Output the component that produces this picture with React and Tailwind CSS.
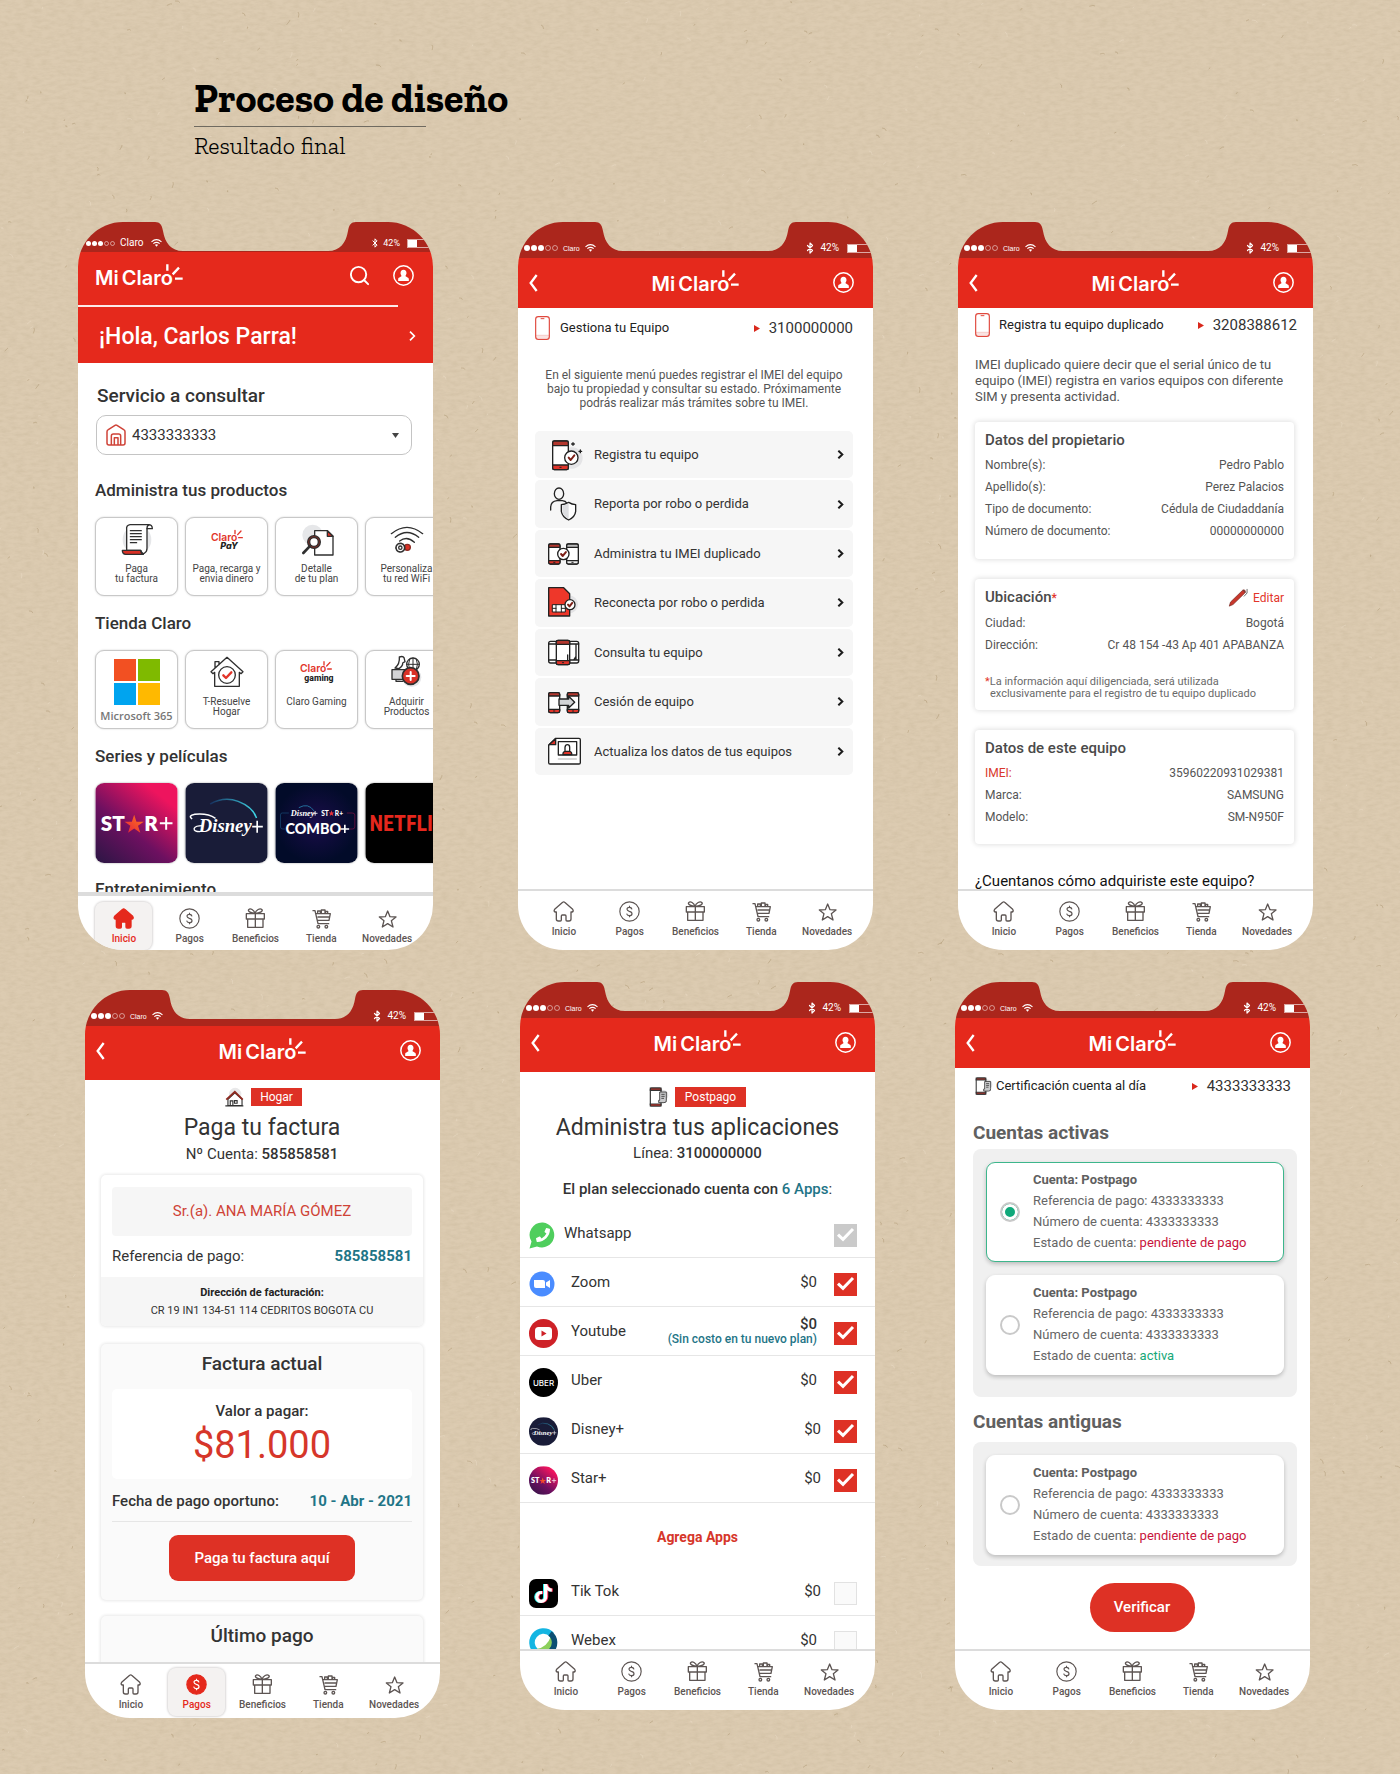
import React from "react";
import { Bluetooth, Search } from "lucide-react";
import { FaPhoneAlt, FaTiktok } from "react-icons/fa";

/* ---------- Paper background ---------- */

function seeded(seed) {
  let s = seed;
  return () => {
    s = (s * 16807) % 2147483647;
    return s / 2147483647;
  };
}

const rand = seeded(77);
const fibres = Array.from({ length: 1500 }, () => {
  const x = Math.round(rand() * 1400);
  const y = Math.round(rand() * 1774);
  const a = rand() * Math.PI;
  const l = 1 + rand() * 5;
  const dx = Math.cos(a) * l;
  const dy = Math.sin(a) * l;
  return {
    d: `M${x} ${y}q${(dx / 2 + 1.5).toFixed(1)} ${(dy / 2 - 1.5).toFixed(1)} ${dx.toFixed(1)} ${dy.toFixed(1)}`,
    dark: rand() > 0.45,
  };
});

function Paper() {
  return (
    <svg className="absolute inset-0 h-full w-full" viewBox="0 0 1400 1774" preserveAspectRatio="xMidYMid slice" aria-hidden="true">
      <defs>
        <filter id="grain" x="0" y="0" width="100%" height="100%">
          <feTurbulence type="fractalNoise" baseFrequency="0.12 0.3" numOctaves="3" seed="4" />
          <feColorMatrix values="0 0 0 0 0.45  0 0 0 0 0.36  0 0 0 0 0.22  0.6 0 0 0 -0.2" />
        </filter>
      </defs>
      <rect width="1400" height="1774" filter="url(#grain)" opacity="0.6" />
      {fibres.map((f, i) => (
        <path key={i} d={f.d} fill="none" stroke={f.dark ? "#a08860" : "#eee3cf"} strokeWidth="0.9" opacity="0.42" />
      ))}
    </svg>
  );
}

/* ---------- Phone shell ---------- */

function StatusDots({ small }) {
  return (
    <span className="flex gap-px">
      {[1, 1, 1, 0, 0].map((on, i) => (
        <span
          key={i}
          className={
            (small ? "size-[5px] " : "size-[6px] ") +
            "rounded-full " +
            (on ? "bg-white" : "border border-white/50")
          }
        />
      ))}
    </span>
  );
}

function Wifi() {
  return (
    <svg className="h-[8px] w-[11px]" viewBox="0 0 33 24" fill="none" stroke="#fff" strokeWidth="3.2" aria-hidden="true">
      <path d="M1.500 8.500Q16.500 -4.500 31.500 8.500M7 14Q16.500 6 26 14" />
      <path d="M11.500 17.500Q16.500 13.500 21.500 17.500L16.500 23.500Z" fill="#fff" stroke="none" />
    </svg>
  );
}

function StatusBar({ small }) {
  return (
    <div
      className={
        "relative flex shrink-0 justify-between overflow-hidden bg-[#ab261c] text-white [clip-path:path('M0_0H77C82_0_84_3_85_9C87_21_93_29_105_29H250C262_29_268_21_270_9C271_3_273_0_278_0H355V40H0Z')] " +
        (small ? "h-[30px] pt-[15px]" : "h-[36px] pt-[20px]")
      }
    >
      <div className={"flex h-[12px] items-center " + (small ? "gap-[5px] pl-[8px]" : "gap-[5px] pl-[6px]")}>
        <StatusDots small={small} />
        <span className={small ? "w-[26px] text-[10px] leading-none" : "w-[17px] text-[7px] leading-none font-[Liberation_Sans]"}>Claro</span>
        <Wifi />
      </div>
      {!small && (
        <span className="absolute inset-x-0 top-[20px] text-center text-[9px] leading-[12px]">04:20 AM</span>
      )}
      <div className={"flex h-[12px] items-center " + (small ? "gap-[3px] text-[9px]" : "gap-[4px] text-[10px]")}>
        <Bluetooth className={small ? "size-[10px]" : "size-[12px]"} strokeWidth={2.4} />
        <span className="leading-none">42%</span>
        <span className="ml-1 flex h-[9px] w-[26px] border border-white/60 bg-transparent">
          <span className="w-[9px] bg-white" />
        </span>
      </div>
    </div>
  );
}

function BrandMark() {
  return (
    <span className="inline-flex items-end text-white">
      <span className="flex gap-[3px] font-[Inter] text-[20px] leading-[24px] font-semibold">
        <span>Mi</span>
        <span>Claro</span>
      </span>
      <svg className="-ml-[8px] h-[28px] w-[18px]" viewBox="0 0 54 84" stroke="#fff" strokeWidth="7" aria-hidden="true">
        <path d="M7 7V26M23 37L42 17M30 50H53" />
      </svg>
    </span>
  );
}

function UserButton() {
  return (
    <button type="button" aria-label="Mi perfil" className="size-[21px]">
      <svg className="size-full" viewBox="0 0 63 63" aria-hidden="true">
        <circle cx="31.500" cy="31.500" r="29" fill="none" stroke="#fff" strokeWidth="4.500" />
        <path
          fill="#fff"
          d="M31.500 14c6 0 9 4 9 10 0 4-2 6-3 9 0 3 9 3 10 9v6h-32v-6c1-6 10-6 10-9-1-3-3-5-3-9 0-6 3-10 9-10z"
        />
      </svg>
    </button>
  );
}

function TopBar({ tall }) {
  return (
    <header
      className={
        "grid shrink-0 grid-cols-[1fr_auto_1fr] items-start bg-[#e5291c] pr-[19px] pl-[11px] " +
        (tall ? "h-[54px]" : "h-[50px]")
      }
    >
      <button type="button" aria-label="Volver" className="mt-[16px] w-[10px]">
        <svg className="h-[18px] w-[9px]" viewBox="0 0 27 54" fill="none" stroke="#fff" strokeWidth="7" aria-hidden="true">
          <path d="M23 3L5 27L23 51" />
        </svg>
      </button>
      <span className="mt-[10px] ml-[8px]">
        <BrandMark />
      </span>
      <span className="mt-[14px] justify-self-end">
        <UserButton />
      </span>
    </header>
  );
}

const line = { fill: "none", stroke: "#5d5553", strokeWidth: 4, strokeLinejoin: "round", strokeLinecap: "round" };

function HomeGlyph({ active }) {
  return (
    <svg className="size-[21px]" viewBox="156 932 63 63" {...line} {...(active ? { fill: "#e5291c", stroke: "#e5291c" } : {})} aria-hidden="true">
      <path d="M185 936Q188 933 191 936L215 957Q219 963 213 965H210V986Q210 992 204 992H198Q195 992 195 989V977Q195 974 192 974H184Q181 974 181 977V989Q181 992 178 992H172Q166 992 166 986V965H163Q157 963 161 957Z" />
    </svg>
  );
}

function CoinGlyph({ active }) {
  return (
    <svg className="size-[21px]" viewBox="0 0 63 63" aria-hidden="true">
      <circle cx="31.500" cy="31.500" r="29" fill={active ? "#e5291c" : "none"} stroke={active ? "#e5291c" : "#5d5553"} strokeWidth="3.500" />
      <path
        d="M39 25q-1-6-8-6-7 0-7 6 0 4 7 6 8 2 8 7 0 6-8 6-7 0-8-6M31.500 14v5M31.500 44v5"
        fill="none"
        stroke={active ? "#fff" : "#5d5553"}
        strokeWidth="3.500"
      />
    </svg>
  );
}

function GiftGlyph() {
  return (
    <svg className="size-[21px]" viewBox="557 932 63 63" {...line} aria-hidden="true">
      <path d="M561 949H615V965H561ZM565 965H611V990H565ZM588 949V990M586 948C572 946 565 942 568 937C573 931 584 938 587 948C590 938 602 931 608 937C611 942 604 946 590 948" />
    </svg>
  );
}

function CartGlyph() {
  return (
    <svg className="size-[21px]" viewBox="753 932 63 63" {...line} aria-hidden="true">
      <path d="M759 940H765L774 979H806M769 949H811L807 969H772M774 959H808" />
      <path d="M773 948V941H781V948M784 948V938H795V948M797 948V942H803V948" />
      <circle cx="775" cy="988" r="4" />
      <circle cx="799" cy="988" r="4" />
    </svg>
  );
}

function StarGlyph() {
  return (
    <svg className="size-[21px]" viewBox="950 932 63 63" {...line} aria-hidden="true">
      <path d="M982 941L989 958L1007 959L993 970L998 989L982 979L966 989L971 970L957 959L975 958Z" />
    </svg>
  );
}

const tabs = [
  ["Inicio", HomeGlyph],
  ["Pagos", CoinGlyph],
  ["Beneficios", GiftGlyph],
  ["Tienda", CartGlyph],
  ["Novedades", StarGlyph],
];

function TabBar({ active, variant = "plain" }) {
  const outer = {
    plain: "h-[61px] border-t-2 pt-[4px]",
    pay: "h-[56px] border-t-2 pt-[4px]",
    home: "h-[58px] border-t-4 pt-[6px]",
  }[variant];
  return (
    <nav className={"grid shrink-0 grid-cols-5 items-start border-[#dcdcdc] bg-white px-[13px] " + outer}>
      {tabs.map(([label, Glyph]) => {
        const on = active === label;
        return (
          <a
            key={label}
            href="#"
            className={
              "mx-auto flex h-[48px] w-[57px] flex-col items-center rounded-[8px] pt-[6px] text-[10px] leading-[12px] font-medium " +
              (on ? "bg-[#f4f2f1] text-[#e5291c] shadow-[0_0_2px_1px_#dcdada]" : "text-[#5d5553]")
            }
          >
            <Glyph active={on} />
            <span className="mt-[4px]">{label}</span>
          </a>
        );
      })}
    </nav>
  );
}

function Phone({ children, small, className = "" }) {
  return (
    <section
      className={
        "flex h-[728px] w-[355px] shrink-0 flex-col overflow-hidden rounded-[45px] font-[Roboto,sans-serif] text-[#333] " + className
      }
    >
      <StatusBar small={small} />
      {children}
    </section>
  );
}

function Content({ children, className = "" }) {
  return <div className={"flex min-h-0 flex-1 flex-col overflow-hidden bg-white " + className}>{children}</div>;
}

function Arrow() {
  return (
    <svg className="h-[7px] w-[6px]" viewBox="0 0 6 7" aria-hidden="true">
      <path d="M0 0L6 3.500L0 7Z" fill="#d9281c" />
    </svg>
  );
}

function LineNumber({ children }) {
  return (
    <span className="ml-auto flex items-center gap-[9px] text-[15px]">
      <Arrow />
      {children}
    </span>
  );
}

/* ---------- Screen 1: home ---------- */

const ink = { fill: "none", stroke: "#2f2f2f", strokeWidth: 4, strokeLinejoin: "round", strokeLinecap: "round" };

function ProductArt({ box, children }) {
  return (
    <svg className="size-[36px]" viewBox={box} {...ink} aria-hidden="true">
      {children}
    </svg>
  );
}

function ClaroArt({ box, x, y, children }) {
  return (
    <ProductArt box={box}>
      <g stroke="none" fill="#e2352a" className="font-[Inter]">
        <text x={x} y={y} fontSize="31" fontWeight="600">Claro</text>
        {children}
      </g>
      <path d={`M${x + 72} ${y - 31}v10M${x + 80} ${y - 18}l10-11M${x + 83} ${y - 9}h11`} stroke="#e2352a" strokeWidth="4" />
    </ProductArt>
  );
}

const products = [
  {
    lines: ["Paga", "tu factura"],
    art: (
      <ProductArt box="177 180 108 108">
        <circle cx="231" cy="236" r="43" fill="#e6e7e9" stroke="none" />
        <path d="M210 191Q198 193 200 206V268H242Q248 282 254 276Q261 272 261 262V203H277Q277 190 264 191Z" fill="#fff" />
        <path d="M261 203Q261 193 267 192" />
        <path d="M187 268H242Q242 278 250 280H197Q187 280 187 268Z" fill="#d93025" />
        <path d="M211 209H244M211 218H244M211 227H244M211 236H244M211 245H230" strokeWidth="3.500" />
      </ProductArt>
    ),
  },
  {
    lines: ["Paga, recarga y", "envia dinero"],
    art: (
      <ClaroArt box="450 180 108 108" x={456} y={239}>
        <text x="484" y="264" fontSize="27" fontWeight="800" fontStyle="italic" fill="#222">PaY</text>
      </ClaroArt>
    ),
  },
  {
    lines: ["Detalle", "de tu plan"],
    art: (
      <ProductArt box="718 180 108 108">
        <circle cx="759" cy="222" r="31" fill="#e6e7e9" stroke="none" />
        <path d="M765 209H803L820 226V282H765Z" fill="#fff" />
        <path d="M803 209V226H820Z" fill="#d93025" />
        <circle cx="763" cy="243" r="19" fill="#8b2a22" />
        <circle cx="763" cy="243" r="13" fill="#fff" />
        <path d="M750 256L731 276" strokeWidth="8" />
      </ProductArt>
    ),
  },
  {
    lines: ["Personaliza", "tu red WiFi"],
    art: (
      <ProductArt box="991 180 108 108">
        <path d="M998 218Q1045 180 1092 218M1010 229Q1045 200 1080 229M1023 240Q1045 223 1067 244" />
        <circle cx="1046" cy="259" r="9" fill="#d93025" stroke="#8b2a22" />
        <circle cx="1025" cy="260" r="13" fill="#fff" strokeWidth="5" strokeDasharray="6 3" />
        <circle cx="1025" cy="260" r="5" />
      </ProductArt>
    ),
  },
];

const store = [
  { microsoft: true },
  {
    lines: ["T-Resuelve", "Hogar"],
    art: (
      <ProductArt box="446 582 108 108">
        <path d="M452 635L500 592L548 635L542 641L537 637V679H463V637L458 641ZM464 624V605H476V614" fill="#fff" />
        <circle cx="500" cy="645" r="25" />
        <path d="M489 646L497 654L513 637" stroke="#e2352a" strokeWidth="7" />
      </ProductArt>
    ),
  },
  {
    lines: ["Claro Gaming"],
    art: (
      <ClaroArt box="717 582 108 108" x={720} y={636}>
        <text x="733" y="662" fontSize="26" fontWeight="800" fill="#222" className="font-[Roboto]">gaming</text>
      </ClaroArt>
    ),
  },
  {
    lines: ["Adquirir", "Productos"],
    art: (
      <ProductArt box="988 582 108 108">
        <circle cx="1056" cy="652" r="29" fill="#e6e7e9" stroke="none" />
        <circle cx="1060" cy="613" r="19" fill="#fff" />
        <path d="M1041 613H1079M1060 594V632M1050 597Q1043 613 1050 629M1070 597Q1077 613 1070 629" strokeWidth="3" />
        <path d="M1019 591Q1030 587 1033 593L1036 605L1029 609Q1030 618 1018 626L1006 624Q1021 612 1019 591Z" fill="#fff" />
        <path d="M997 629H1045V658H997ZM1009 658V664H1030" fill="#d3d4d6" />
        <circle cx="1053" cy="648" r="25" fill="#d93025" strokeWidth="5" />
        <path d="M1053 636V660M1041 648H1065" stroke="#fff" strokeWidth="6" />
      </ProductArt>
    ),
  },
];

function Tile({ item }) {
  return (
    <a
      href="#"
      className="flex h-[79px] w-[83px] shrink-0 flex-col items-center rounded-[9px] border border-[#c8c8c8] bg-white pt-[3px] shadow-[0_0_2px_#ccc]"
    >
      {item.microsoft ? (
        <>
          <span className="mt-[5px] grid grid-cols-2 gap-[2px]">
            <span className="size-[22px] bg-[#f25022]" />
            <span className="size-[22px] bg-[#7fba00]" />
            <span className="size-[22px] bg-[#00a4ef]" />
            <span className="size-[22px] bg-[#ffb900]" />
          </span>
          <span className="mt-[3px] font-['Open_Sans'] text-[11px] leading-[16px] font-semibold whitespace-nowrap text-[#777]">
            Microsoft 365
          </span>
        </>
      ) : (
        <>
          {item.art}
          <span className="mt-[7px] text-center text-[10px] leading-[10px] whitespace-nowrap text-[#444]">
            {item.lines.map((l) => (
              <span key={l} className="block">{l}</span>
            ))}
          </span>
        </>
      )}
    </a>
  );
}

const STAR = "M0 -25L6 -7L25 -7L10 4L16 22L0 11L-16 22L-10 4L-25 -7L-6 -7Z";

function StarArt() {
  return (
    <svg className="size-full" viewBox="0 0 246 240" aria-label="Star+">
      <defs>
        <linearGradient id="starBg" x1="0.1" y1="1" x2="0.9" y2="0">
          <stop offset="0" stopColor="#321547" />
          <stop offset="0.4" stopColor="#6d1060" />
          <stop offset="0.85" stopColor="#ee145e" />
        </linearGradient>
        <linearGradient id="starFill" x1="0" y1="1" x2="1" y2="0">
          <stop offset="0" stopColor="#e5203c" />
          <stop offset="1" stopColor="#ff7a1c" />
        </linearGradient>
      </defs>
      <rect width="246" height="240" fill="url(#starBg)" />
      <g fill="#fff" className="font-[Lato]" fontSize="62" fontWeight="800">
        <text x="16" y="143">ST</text>
        <text x="146" y="143">R</text>
      </g>
      <path d={STAR} transform="translate(116 124) scale(1.150)" fill="url(#starFill)" />
      <path d="M212 102V140M193 121H231" stroke="#fff" strokeWidth="6" />
    </svg>
  );
}

function DisneyWord({ x, y, size }) {
  return (
    <text x={x} y={y} fontSize={size} fontStyle="italic" fontWeight="700" fill="#fff" className="font-[Liberation_Serif]">
      Disney
    </text>
  );
}

function DisneyArt() {
  return (
    <svg className="size-full" viewBox="0 0 246 240" aria-label="Disney+">
      <defs>
        <linearGradient id="arc" x1="0" x2="1">
          <stop offset="0" stopColor="#16305e" />
          <stop offset="1" stopColor="#3fd8e8" />
        </linearGradient>
      </defs>
      <rect width="246" height="240" fill="#191c38" />
      <path d="M74 63Q115 40 158 55Q202 72 213 105" fill="none" stroke="url(#arc)" strokeWidth="4.500" />
      <DisneyWord x="40" y="147" size="56" />
      <path d="M20 108Q6 98 28 94Q66 90 90 106" fill="none" stroke="#fff" strokeWidth="4.500" />
      <path d="M44 146Q24 146 26 136Q30 128 52 128" fill="none" stroke="#fff" strokeWidth="4" />
      <path d="M215 113V149M200 131H232" stroke="#fff" strokeWidth="5" />
    </svg>
  );
}

function ComboArt() {
  return (
    <svg className="size-full" viewBox="0 0 246 240" aria-label="Combo+">
      <defs>
        <radialGradient id="comboBg">
          <stop offset="0" stopColor="#1a0d4a" />
          <stop offset="1" stopColor="#020b29" />
        </radialGradient>
      </defs>
      <rect width="246" height="240" fill="url(#comboBg)" />
      <path d="M40 90H20Q15 90 15 96V132Q15 138 22 138H28" fill="none" stroke="#14406a" strokeWidth="2.500" />
      <path d="M214 90H230Q238 90 238 96V132Q238 138 230 138H222" fill="none" stroke="#6a1140" strokeWidth="2.500" />
      <path d="M70 74Q98 58 116 84" fill="none" stroke="#2683b0" strokeWidth="2.500" />
      <DisneyWord x="46" y="98" size="25" />
      <path d="M119 84V98M112 91H126" stroke="#fff" strokeWidth="2.500" />
      <g fill="#fff" className="font-[Lato]" fontWeight="900">
        <text x="137" y="98" fontSize="20">ST</text>
        <text x="178" y="98" fontSize="20">R+</text>
        <text x="30" y="152" fontSize="43">COMBO</text>
      </g>
      <path d={STAR} transform="translate(168 91) scale(0.360)" fill="#e8333a" />
      <path d="M208 125V150M195 138H221" stroke="#fff" strokeWidth="5" />
    </svg>
  );
}

function NetflixArt() {
  return (
    <svg className="size-full" viewBox="0 0 246 240" aria-label="Netflix">
      <rect width="246" height="240" fill="#000" />
      <text
        x="12"
        y="143"
        fontSize="66"
        fontWeight="700"
        fill="#e5271d"
        className="font-['Roboto_Condensed','Liberation_Sans_Narrow','Open_Sans_Condensed','DejaVu_Sans_Condensed']"
      >
        NETFLIX
      </text>
    </svg>
  );
}

function Shelf({ title, children }) {
  return (
    <section className="flex h-[133px] shrink-0 flex-col">
      <h3 className="text-[17px] leading-[24px] font-medium">{title}</h3>
      <div className="mt-[15px] flex gap-[7px]">{children}</div>
    </section>
  );
}

function HomeScreen() {
  return (
    <Phone small>
      <header className="flex h-[111px] shrink-0 flex-col bg-[#e5291c] text-white">
        <div className="flex h-[53px] items-start justify-between pr-[19px] pl-[17px]">
          <span className="mt-[10px]">
            <BrandMark />
          </span>
          <div className="mt-[12px] flex items-center gap-[22px]">
            <button type="button" aria-label="Buscar">
              <Search className="size-[23px]" strokeWidth={2} />
            </button>
            <UserButton />
          </div>
        </div>
        <div className="h-[2px] w-[90%] bg-white/90" />
        <a href="#" className="flex flex-1 items-center justify-between pr-[17px] pl-[21px]">
          <h2 className="mt-[4px] text-[23px] leading-[26px] font-medium">¡Hola, Carlos Parra!</h2>
          <svg className="mt-[2px] h-[10px] w-[7px]" viewBox="0 0 21 30" fill="none" stroke="#fff" strokeWidth="5" aria-hidden="true">
            <path d="M3 2L16 15L3 28" />
          </svg>
        </a>
      </header>
      <Content className="pl-[17px]">
        <label htmlFor="servicio" className="mt-[21px] pl-[2px] text-[19px] leading-[24px] font-medium">
          Servicio a consultar
        </label>
        <div className="mt-[7px] mr-[21px] ml-px grid h-[40px] shrink-0 items-center">
          <select
            id="servicio"
            className="h-full w-full appearance-none rounded-[10px] border border-[#c4c4c4] bg-white pl-[35px] text-[15px] [grid-area:1/1]"
          >
            <option>4333333333</option>
          </select>
          <svg className="pointer-events-none ml-[10px] h-[22px] w-[20px] [grid-area:1/1]" viewBox="139 1092 60 66" fill="none" stroke="#cf4338" strokeWidth="4.500" strokeLinejoin="round" aria-hidden="true">
            <path d="M142 1115Q142 1111 146 1109L166 1096Q169 1094 172 1096L192 1109Q196 1111 196 1115V1149Q196 1155 190 1155H148Q142 1155 142 1149ZM155 1155V1128Q155 1122 161 1122H177Q183 1122 183 1128V1155M164 1155V1133H175V1155" />
          </svg>
          <svg className="pointer-events-none mr-[13px] h-[5px] w-[7px] justify-self-end [grid-area:1/1]" viewBox="0 0 7 5" aria-hidden="true">
            <path d="M0 0H7L3.500 5Z" fill="#444" />
          </svg>
        </div>
        <div className="mt-[23px] flex flex-col">
          <Shelf title="Administra tus productos">
            {products.map((p) => (
              <Tile key={p.lines[0]} item={p} />
            ))}
          </Shelf>
          <Shelf title="Tienda Claro">
            {store.map((p, i) => (
              <Tile key={i} item={p} />
            ))}
          </Shelf>
          <Shelf title="Series y películas">
            {[StarArt, DisneyArt, ComboArt, NetflixArt].map((Art, i) => (
              <a key={i} href="#" className="h-[80px] w-[83px] shrink-0 overflow-hidden rounded-[9px] shadow-[0_0_2px_#999]">
                <Art />
              </a>
            ))}
          </Shelf>
          <Shelf title="Entretenimiento" />
        </div>
      </Content>
      <TabBar active="Inicio" variant="home" />
    </Phone>
  );
}

/* ---------- Screen 2: device menu ---------- */

function MenuArt({ y, children }) {
  return (
    <svg className="size-[36px]" viewBox={`140 ${y} 108 108`} {...ink} stroke="#222" aria-hidden="true">
      {children}
    </svg>
  );
}

function MiniPhone({ x, y, w, h, red = true, top }) {
  const band = Math.round(h * 0.16);
  return (
    <g>
      <rect x={x} y={y} width={w} height={h} rx="5" fill="#fff" />
      <path d={`M${x} ${y + band}V${y + 5}Q${x} ${y} ${x + 5} ${y}H${x + w - 5}Q${x + w} ${y} ${x + w} ${y + 5}V${y + band}Z`} fill={top || (red ? "#b3372e" : "#bbb")} />
      <path
        d={`M${x} ${y + h - band}H${x + w}V${y + h - 5}Q${x + w} ${y + h} ${x + w - 5} ${y + h}H${x + 5}Q${x} ${y + h} ${x} ${y + h - 5}Z`}
        fill={red ? "#e0342a" : "#eee"}
      />
      <path d={`M${x + w / 2 - 2} ${y + h - band / 2}h4`} strokeWidth="3" />
    </g>
  );
}

function CheckBadge({ x, y, r }) {
  return (
    <g>
      <circle cx={x} cy={y} r={r} fill="#fff" />
      <path d={`M${x - r * 0.4} ${y}l${r * 0.3} ${r * 0.35}l${r * 0.55} ${-r * 0.7}`} stroke="#7d2018" strokeWidth="6" />
    </g>
  );
}

const menu = [
  [
    "Registra tu equipo",
    <MenuArt y={681}>
      <circle cx="215" cy="744" r="32" fill="#e4e4e6" stroke="none" />
      <MiniPhone x={157} y={693} w={47} h={86} />
      <CheckBadge x={213} y={743} r={20} />
      <path d="M218 698V706M214 702H222M240 720V728M236 724H244" />
    </MenuArt>,
  ],
  [
    "Reporta por robo o perdida",
    <MenuArt y={829}>
      <ellipse cx="176" cy="852" rx="14" ry="17" fill="#f6f6f6" />
      <path d="M151 901V892Q152 875 170 873H186Q196 874 199 880" />
      <path d="M205 878Q215 884 226 885V905Q224 922 205 931Q186 922 183 905V885Q195 884 205 878Z" fill="#fff" />
      <path d="M205 881Q194 886 186 888V905Q188 920 205 928Z" fill="#dcdde0" stroke="none" />
    </MenuArt>,
  ],
  [
    "Administra tu IMEI duplicado",
    <MenuArt y={977}>
      <MiniPhone x={145} y={1001} w={34} h={60} />
      <MiniPhone x={199} y={1001} w={35} h={60} red={false} />
      <CheckBadge x={189} y={1031} r={17} />
    </MenuArt>,
  ],
  [
    "Reconecta por robo o perdida",
    <MenuArt y={1125}>
      <circle cx="206" cy="1183" r="27" fill="#e4e4e6" stroke="none" />
      <path d="M145 1133H190L208 1151V1218H145Z" fill="#ee372a" />
      <path d="M157 1184H195V1206H157ZM167 1184V1206M183 1184V1206M157 1195H167M183 1195H195" fill="#fff" strokeWidth="3" />
      <CheckBadge x={209} y={1184} r={15} />
    </MenuArt>,
  ],
  [
    "Consulta tu equipo",
    <MenuArt y={133}>
      <rect x="145" y="155" width="90" height="65" rx="6" fill="#fff" />
      <path d="M145 163H235M145 211H235M227 163V211M220 211L227 200" />
      <MiniPhone x={168} y={152} w={40} h={73} />
      <path d="M202 212V196" />
    </MenuArt>,
  ],
  [
    "Cesión de equipo",
    <MenuArt y={281}>
      <MiniPhone x={145} y={307} w={33} h={60} />
      <MiniPhone x={201} y={307} w={34} h={60} />
      <path d="M176 326H205V318L223 336L205 353V345H176Z" fill="#d3d4d6" />
    </MenuArt>,
  ],
  [
    "Actualiza los datos de tus equipos",
    <MenuArt y={429}>
      <path d="M166 445H236Q240 445 240 449V518Q240 522 236 522H149Q145 522 145 518V466Z" fill="#fff" />
      <path d="M166 446V464H146Z" fill="#d93025" />
      <path d="M174 455H229V495H174Z" />
      <path d="M188 494V490Q189 484 196 484H206Q213 484 214 490V494Z" fill="#e0342a" />
      <path d="M194 482V472Q195 464 201 464Q208 464 208 472V482" />
      <path d="M174 507H228" stroke="#ccc" />
    </MenuArt>,
  ],
];

function PhoneOutline() {
  return (
    <svg className="h-[24px] w-[15px]" viewBox="0 0 45 72" fill="none" stroke="#e0483d" aria-hidden="true">
      <rect x="2" y="2" width="41" height="68" rx="8" strokeWidth="3.500" />
      <path d="M3 58H42M3 63H42" strokeWidth="1.500" opacity="0.6" />
      <path d="M17 8H28" strokeWidth="3" />
    </svg>
  );
}

function DeviceMenuScreen() {
  return (
    <Phone>
      <TopBar />
      <Content className="pr-[20px] pl-[17px]">
        <div className="mt-[7px] flex h-[26px] shrink-0 items-center">
          <PhoneOutline />
          <h2 className="ml-[10px] text-[13px] text-[#222]">Gestiona tu Equipo</h2>
          <LineNumber>3100000000</LineNumber>
        </div>
        <p className="-mx-2 mt-[27px] text-center text-[12px] leading-[14px] text-[#555]">
          En el siguiente menú puedes registrar el IMEI del equipo
          <br />
          bajo tu propiedad y consultar su estado. Próximamente
          <br />
          podrás realizar más trámites sobre tu IMEI.
        </p>
        <ul className="mt-[21px] grid h-[344px] shrink-0 grid-rows-7 gap-[2px]">
          {menu.map(([label, art]) => (
            <li key={label} className="flex">
              <a href="#" className="flex flex-1 items-center rounded-[5px] bg-[#f6f6f6] pr-[9px] pl-[12px] text-[13px]">
                {art}
                <span className="ml-[11px]">{label}</span>
                <svg className="ml-auto h-[9px] w-[7px]" viewBox="0 0 21 27" fill="none" stroke="#1c1c1c" strokeWidth="6" aria-hidden="true">
                  <path d="M4 2L16 13.500L4 25" />
                </svg>
              </a>
            </li>
          ))}
        </ul>
      </Content>
      <TabBar />
    </Phone>
  );
}

/* ---------- Screen 3: duplicated device ---------- */

function InfoCard({ title, action, rows, children, className }) {
  return (
    <section className={"shrink-0 rounded-[4px] bg-white px-[10px] pt-[8px] shadow-[0_0_5px_1px_rgba(0,0,0,0.12)] " + className}>
      <div className="flex items-center justify-between">
        <h3 className="text-[15px] leading-[20px] font-medium text-[#4a4a4a]">{title}</h3>
        {action}
      </div>
      <dl className="mt-[4px] text-[12px] leading-[22px] text-[#555]">
        {rows.map(([k, v, red]) => (
          <div key={k} className="flex justify-between">
            <dt className={red ? "text-[#d9382c]" : ""}>{k}</dt>
            <dd>{v}</dd>
          </div>
        ))}
      </dl>
      {children}
    </section>
  );
}

function DuplicateScreen() {
  return (
    <Phone>
      <TopBar />
      <Content className="pr-[19px] pl-[17px]">
        <div className="-mr-[3px] mt-[4px] flex h-[26px] shrink-0 items-center">
          <PhoneOutline />
          <h2 className="ml-[9px] text-[13px] text-[#222]">Registra tu equipo duplicado</h2>
          <LineNumber>3208388612</LineNumber>
        </div>
        <p className="-mr-3 mt-[19px] text-[13px] leading-[16px] text-[#555]">
          IMEI duplicado quiere decir que el serial único de tu
          <br />
          equipo (IMEI) registra en varios equipos con diferente
          <br />
          SIM y presenta actividad.
        </p>
        <InfoCard
          className="mt-[17px] h-[137px]"
          title="Datos del propietario"
          rows={[
            ["Nombre(s):", "Pedro Pablo"],
            ["Apellido(s):", "Perez Palacios"],
            ["Tipo de documento:", "Cédula de Ciudaddanía"],
            ["Número de documento:", "00000000000"],
          ]}
        />
        <InfoCard
          className="mt-[20px] h-[131px]"
          title={
            <>
              Ubicación<span className="text-[12px] text-[#e2352a]">*</span>
            </>
          }
          action={
            <button type="button" className="flex items-center gap-[5px] text-[12px] leading-[20px] text-[#e2352a]">
              <svg className="size-[20px]" viewBox="868 78 64 62" aria-hidden="true">
                <path d="M872 135L876 122L914 85Q918 81 922 84Q926 88 922 93L884 130Z" fill="#c8372c" stroke="#6e241d" strokeWidth="2" />
                <path d="M915 83L924 92M929 80V93L919 104" fill="none" stroke="#444" strokeWidth="2.500" />
              </svg>
              Editar
            </button>
          }
          rows={[
            ["Ciudad:", "Bogotá"],
            ["Dirección:", "Cr 48 154 -43 Ap 401 APABANZA"],
          ]}
        >
          <p className="mt-[20px] pl-[5px] text-[11px] leading-[12px] whitespace-nowrap text-[#6a6a6a]">
            <span className="-ml-[5px] text-[#e2352a]">*</span>La información aquí diligenciada, será utilizada
            <br />
            exclusivamente para el registro de tu equipo duplicado
          </p>
        </InfoCard>
        <InfoCard
          className="mt-[20px] h-[114px]"
          title="Datos de este equipo"
          rows={[
            ["IMEI:", "35960220931029381", true],
            ["Marca:", "SAMSUNG"],
            ["Modelo:", "SM-N950F"],
          ]}
        />
        <h3 className="mt-[27px] text-[15px] leading-[20px] text-[#111]">¿Cuentanos cómo adquiriste este equipo?</h3>
      </Content>
      <TabBar />
    </Phone>
  );
}

/* ---------- Screen 4: bill payment ---------- */

const card = "shrink-0 rounded-[5px] shadow-[0_0_3px_1px_rgba(0,0,0,0.09)]";

function HouseArt() {
  return (
    <svg className="h-[20px] w-[19px]" viewBox="466 349 58 60" fill="none" stroke="#333" strokeWidth="3.500" aria-hidden="true">
      <circle cx="497" cy="370" r="19" fill="#e9e9ea" stroke="none" />
      <path d="M475 386V405H518V386L496 366Z" fill="#fff" />
      <path d="M470 387L496 363L520 387" stroke="#8f2b22" strokeWidth="6" />
      <path d="M482 405V391H490V405M495 390H503V398H495ZM467 406H522" />
    </svg>
  );
}

function BillPhoneArt({ className = "size-[20px]" }) {
  return (
    <svg className={className} viewBox="455 349 60 60" fill="none" stroke="#333" strokeWidth="3.500" aria-hidden="true">
      <circle cx="496" cy="374" r="17" fill="#e2e2e4" stroke="none" />
      <rect x="459" y="352" width="32" height="54" rx="4" fill="#fff" />
      <path d="M459 359V352H491V359Z" fill="#a8352c" />
      <path d="M459 400H491V406H459Z" fill="#d93025" />
      <path d="M487 364H507V388Q509 396 500 396H484V389H487Z" fill="#c9cacc" strokeWidth="2.500" />
      <path d="M492 371H502M492 377H502M492 383H500" strokeWidth="2.500" />
    </svg>
  );
}

function PaymentScreen() {
  return (
    <Phone className="mt-2">
      <TopBar tall />
      <Content className="pr-[17px] pl-[16px]">
        <div className="mt-[7px] ml-[3px] flex h-[20px] shrink-0 items-center justify-center gap-[7px]">
          <HouseArt />
          <span className="bg-[#de3125] px-[9px] text-[12px] leading-[18px] text-white">Hogar</span>
        </div>
        <h2 className="mt-[7px] text-center text-[23px] leading-[28px]">Paga tu factura</h2>
        <p className="mt-[2px] text-center text-[15px] leading-[20px]">
          Nº Cuenta: <span className="font-medium">585858581</span>
        </p>
        <section className={card + " mt-[11px] h-[151px] overflow-visible bg-white"}>
          <div className="px-[11px] pt-[12px]">
            <p className="rounded-[4px] bg-[#f6f6f6] py-[15px] text-center text-[15px] leading-[19px] text-[#cf4336]">
              Sr.(a). ANA MARÍA GÓMEZ
            </p>
            <div className="flex h-[41px] items-center justify-between text-[15px]">
              <span>Referencia de pago:</span>
              <span className="font-bold text-[#1f7587]">585858581</span>
            </div>
          </div>
          <div className="h-[49px] rounded-b-[5px] bg-[#f6f6f6] pt-[7px] text-center text-[11px] leading-[18px]">
            <p className="font-bold text-[#222]">Dirección de facturación:</p>
            <p>CR 19 IN1 134-51 114 CEDRITOS BOGOTA CU</p>
          </div>
        </section>
        <section className={card + " mt-[18px] flex h-[256px] flex-col items-center bg-[#fafafa] px-[11px]"}>
          <h3 className="mt-[8px] text-[19px] leading-[24px] font-medium">Factura actual</h3>
          <div className="mt-[13px] h-[90px] w-full rounded-[5px] bg-white text-center">
            <p className="mt-[12px] text-[15px] leading-[20px] font-medium">Valor a pagar:</p>
            <p className="mt-[2px] text-[38px] leading-[44px] text-[#d6362a]">$81.000</p>
          </div>
          <div className="flex h-[43px] w-full items-center justify-between border-b border-[#e6e6e6] pt-[3px] text-[15px] font-medium">
            <span>Fecha de pago oportuno:</span>
            <span className="font-bold text-[#1f7587]">10 - Abr - 2021</span>
          </div>
          <button type="button" className="mt-[13px] h-[46px] w-[186px] rounded-[9px] bg-[#de3125] text-[15px] font-medium text-white">
            Paga tu factura aquí
          </button>
        </section>
        <section className={card + " mt-[16px] h-[80px] bg-[#fafafa]"}>
          <h3 className="mt-[8px] text-center text-[19px] leading-[24px] font-medium">Último pago</h3>
        </section>
      </Content>
      <TabBar active="Pagos" variant="pay" />
    </Phone>
  );
}

/* ---------- Screen 5: apps ---------- */

const Round = ({ children, className = "" }) => (
  <span className={"flex size-[29px] items-center justify-center overflow-hidden rounded-full " + className}>{children}</span>
);

const appIcons = {
  whatsapp: (
    <span className="grid size-[27px] items-center justify-items-center text-white">
      <svg className="size-[27px] [grid-area:1/1]" viewBox="0 0 27 27" aria-hidden="true">
        <path d="M14 0.500A12.500 12.500 0 1 1 8 24.500L0.500 26.500L2.500 19.500A12.500 12.500 0 0 1 14 0.500Z" fill="#4fce5d" />
      </svg>
      <FaPhoneAlt className="size-[14px] -scale-x-100 [grid-area:1/1]" />
    </span>
  ),
  zoom: (
    <svg className="size-[26px]" viewBox="0 0 26 26" aria-hidden="true">
      <circle cx="13" cy="13" r="12.500" fill="#4a8cff" />
      <path d="M5 9h9q2 0 2 2v6H7q-2 0-2-2zM17 11.500l4-2.500v8l-4-2.500z" fill="#fff" />
    </svg>
  ),
  youtube: (
    <svg className="size-[29px]" viewBox="0 0 29 29" aria-hidden="true">
      <circle cx="14.500" cy="14.500" r="14.500" fill="#ce2127" />
      <rect x="6" y="8" width="17" height="13" rx="3.500" fill="#fff" />
      <path d="M12.500 11.500V17.500L17.500 14.500Z" fill="#ce2127" />
    </svg>
  ),
  uber: <Round className="bg-black font-[Inter] text-[8px] font-medium text-white">UBER</Round>,
  disney: (
    <Round>
      <DisneyArt />
    </Round>
  ),
  star: (
    <Round>
      <StarArt />
    </Round>
  ),
  tiktok: (
    <span className="grid size-[29px] items-center justify-items-center rounded-[7px] bg-black">
      <FaTiktok className="mr-[2px] size-[19px] text-[#25f4ee] [grid-area:1/1]" />
      <FaTiktok className="mt-px ml-[2px] size-[19px] text-[#fe2c55] [grid-area:1/1]" />
      <FaTiktok className="size-[19px] text-white [grid-area:1/1]" />
    </span>
  ),
  webex: (
    <svg className="size-[29px]" viewBox="0 0 29 29" fill="none" aria-hidden="true">
      <circle cx="14.500" cy="14.500" r="14.500" fill="#fff" />
      <path d="M23 8Q25 21 12 23Q18 24 22 20Q26 14 23 8Z" fill="#6cc04a" />
      <path d="M22 8Q18 20 7 21Q15 26 21 21Q25 15 22 8Z" fill="#8ccf5c" />
      <circle cx="14.500" cy="14.500" r="11.500" stroke="#14b5e2" strokeWidth="5.500" strokeDasharray="46 27" transform="rotate(85 14.500 14.500)" />
      <path d="M21 5.500A11.500 11.500 0 0 1 22 23" stroke="#0b4f73" strokeWidth="5.500" />
    </svg>
  ),
};

function AppRow({ id, name, price, note, state = "on", rule = true, wide }) {
  return (
    <li className={"flex h-[49px] items-center pr-[18px] pl-[9px] " + (rule ? "border-b border-[#e6e6e6]" : "")}>
      <span className={"flex items-center pt-[4px] " + (id === "whatsapp" ? "w-[35px]" : "w-[42px]")}>{appIcons[id]}</span>
      <label htmlFor={`app-${id}`} className="text-[15px]">
        {name}
      </label>
      <span className={"ml-auto text-right text-[15px] leading-[15px] " + (wide ? "mr-[13px]" : "mr-[17px]") + (note ? " font-medium" : "")}>
        {price}
        {note && <span className="block text-[12px] leading-[14px] text-[#1f7587]">{note}</span>}
      </span>
      <span className="mt-[4px] grid">
        <input
          id={`app-${id}`}
          type="checkbox"
          defaultChecked={state !== "off"}
          disabled={state === "locked"}
          className="size-[23px] appearance-none border border-[#e2e2e2] bg-[#fafafa] [grid-area:1/1] checked:border-0 checked:bg-[#de3125] checked:disabled:bg-[#cacaca]"
        />
        {state !== "off" && (
          <svg className="pointer-events-none size-[23px] [grid-area:1/1]" viewBox="0 0 69 69" fill="none" stroke="#fff" strokeWidth="9" aria-hidden="true">
            <path d="M12 32L27 46L57 15" />
          </svg>
        )}
      </span>
    </li>
  );
}

function AppsScreen() {
  return (
    <Phone>
      <TopBar tall />
      <Content>
        <div className="mt-[15px] flex h-[20px] shrink-0 items-center justify-center gap-[6px]">
          <BillPhoneArt />
          <span className="bg-[#de3125] px-[10px] text-[12px] leading-[20px] text-white">Postpago</span>
        </div>
        <h2 className="mt-[7px] text-center text-[23px] leading-[28px]">Administra tus aplicaciones</h2>
        <p className="mt-[1px] text-center text-[15px] leading-[20px]">
          Línea: <span className="font-medium">3100000000</span>
        </p>
        <p className="mt-[16px] text-center text-[15px] leading-[20px] font-medium">
          El plan seleccionado cuenta con <span className="text-[#1f7587]">6 Apps</span>
          <span className="font-normal">:</span>
        </p>
        <ul className="mt-[10px]">
          <AppRow id="whatsapp" name="Whatsapp" state="locked" />
          <AppRow id="zoom" name="Zoom" price="$0" />
          <AppRow id="youtube" name="Youtube" price="$0" note="(Sin costo en tu nuevo plan)" />
          <AppRow id="uber" name="Uber" price="$0" rule={false} />
          <AppRow id="disney" name="Disney+" price="$0" wide />
          <AppRow id="star" name="Star+" price="$0" wide />
        </ul>
        <h3 className="mt-[24px] text-center text-[14px] leading-[20px] font-bold text-[#d6362a]">Agrega Apps</h3>
        <ul className="mt-[20px]">
          <AppRow id="tiktok" name="Tik Tok" price="$0" state="off" wide />
          <AppRow id="webex" name="Webex" price="$0" state="off" />
        </ul>
      </Content>
      <TabBar />
    </Phone>
  );
}

/* ---------- Screen 6: accounts ---------- */

function Account({ id, selected, status, overdue }) {
  return (
    <label
      htmlFor={id}
      className={
        "flex h-[100px] items-center rounded-[9px] border bg-white pl-[13px] shadow-[0_2px_4px_rgba(0,0,0,0.22)] " +
        (selected ? "border-[#3db68c]" : "border-white")
      }
    >
      <input
        id={id}
        type="radio"
        name="cuenta"
        defaultChecked={selected}
        className="size-[20px] shrink-0 appearance-none rounded-full border-2 border-[#c9c9c9] bg-white checked:shadow-[inset_0_0_0_3px_#fff] checked:bg-[#0fa97a]"
      />
      <span className="ml-[13px] flex flex-col pb-[2px] text-[13px] leading-[21px] text-[#666]">
        <span className="font-bold text-[#5f5f5f]">Cuenta: Postpago</span>
        <span>Referencia de pago: 4333333333</span>
        <span>Número de cuenta: 4333333333</span>
        <span>
          Estado de cuenta: <span className={overdue ? "text-[#c8143c]" : "text-[#16a878]"}>{status}</span>
        </span>
      </span>
    </label>
  );
}

function AccountsScreen() {
  return (
    <Phone>
      <TopBar />
      <Content className="pr-[13px] pl-[18px]">
        <div className="mt-[6px] mr-[6px] flex h-[24px] shrink-0 items-center pl-[2px]">
          <BillPhoneArt className="size-[18px]" />
          <h2 className="ml-[3px] text-[13px] text-[#222]">Certificación cuenta al día</h2>
          <LineNumber>4333333333</LineNumber>
        </div>
        <h3 className="mt-[23px] text-[19px] leading-[24px] font-bold text-[#606060]">Cuentas activas</h3>
        <div className="mt-[4px] flex shrink-0 flex-col gap-[13px] rounded-[8px] bg-[#f0f0f0] px-[13px] pt-[13px] pb-[22px]">
          <Account id="cuenta-1" selected status="pendiente de pago" overdue />
          <Account id="cuenta-2" status="activa" />
        </div>
        <h3 className="mt-[13px] text-[19px] leading-[24px] font-bold text-[#606060]">Cuentas antiguas</h3>
        <div className="mt-[8px] flex shrink-0 flex-col rounded-[8px] bg-[#f0f0f0] px-[13px] pt-[13px] pb-[11px]">
          <Account id="cuenta-3" status="pendiente de pago" overdue />
        </div>
        <div className="mt-[17px] flex justify-center pl-[14px]">
          <button type="button" className="h-[49px] w-[105px] rounded-full bg-[#de3125] text-[15px] font-medium text-white">
            Verificar
          </button>
        </div>
      </Content>
      <TabBar />
    </Phone>
  );
}

/* ---------- Page ---------- */

export default function App() {
  return (
    <div className="relative min-h-screen bg-[#dccbb1]">
      <Paper />
      <main className="relative">
        <header className="px-[194px] pt-[76px] pb-[60px] text-black">
          <h1 className="font-['Zilla_Slab','Roboto_Slab','DejaVu_Serif_Condensed','DejaVu_Serif',serif] text-[40px] leading-[44px] font-bold whitespace-nowrap">
            Proceso de diseño
          </h1>
          <div className="mt-[6px] h-px w-[232px] bg-[#6f6a60]" />
          <p className="mt-[3px] font-['Zilla_Slab','Liberation_Serif',serif] text-[24px] leading-[32px] font-light">Resultado final</p>
        </header>
        <div className="flex flex-wrap justify-between gap-y-[32px] pr-[87px] pl-[78px]">
          <HomeScreen />
          <DeviceMenuScreen />
          <DuplicateScreen />
        </div>
        <div className="mt-[32px] flex flex-wrap justify-between gap-y-[32px] pr-[90px] pb-[56px] pl-[85px]">
          <PaymentScreen />
          <AppsScreen />
          <AccountsScreen />
        </div>
      </main>
    </div>
  );
}
